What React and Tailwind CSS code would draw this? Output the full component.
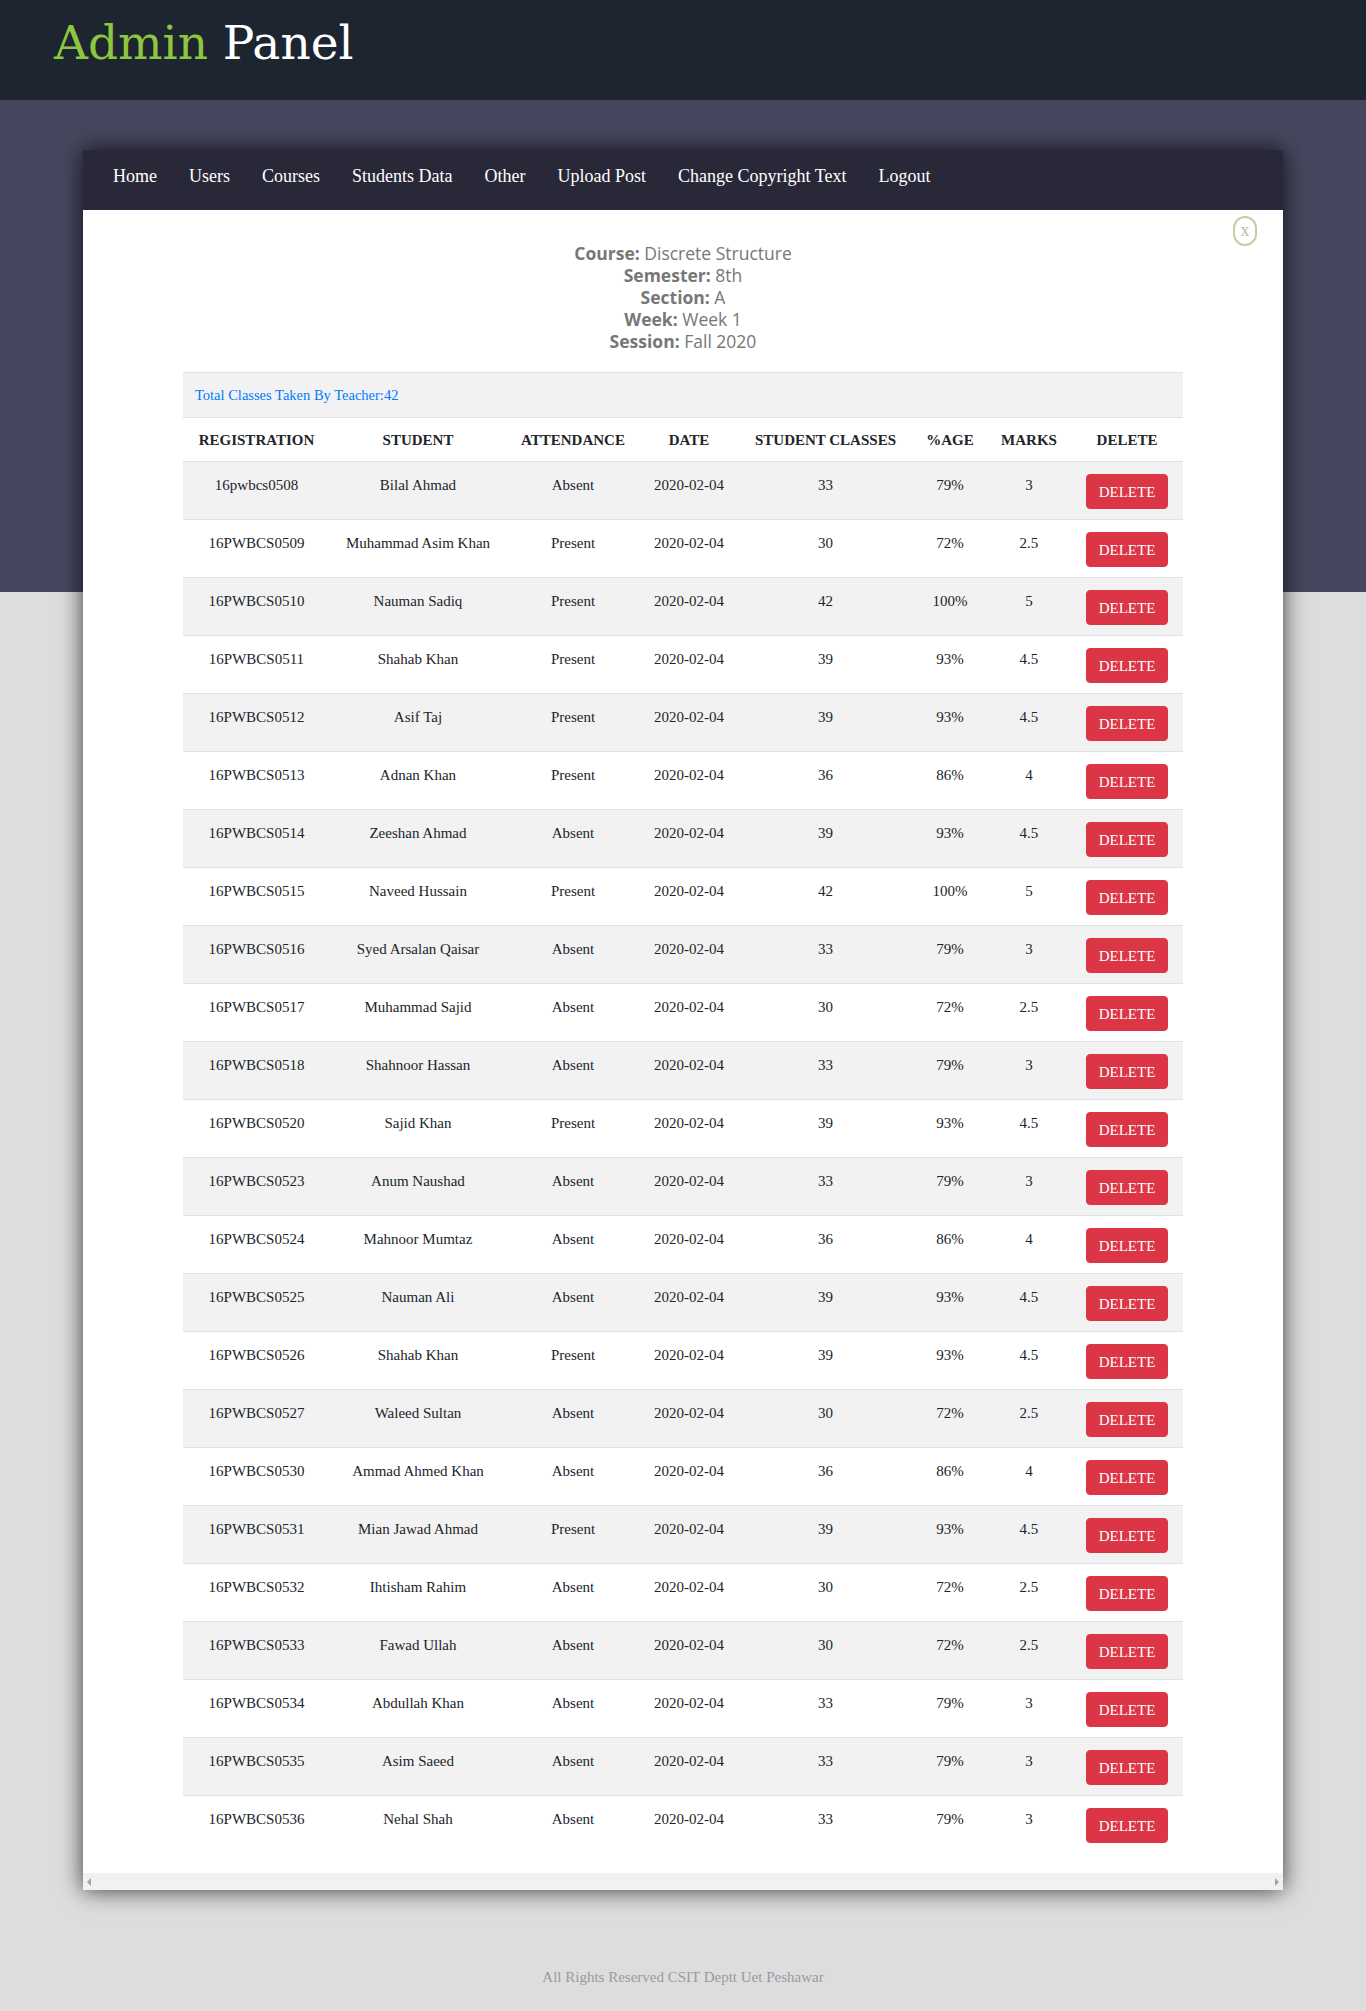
import React from "react";

const rows = [
  ["16pwbcs0508", "Bilal Ahmad", "Absent", "33", "79%", "3"],
  ["16PWBCS0509", "Muhammad Asim Khan", "Present", "30", "72%", "2.5"],
  ["16PWBCS0510", "Nauman Sadiq", "Present", "42", "100%", "5"],
  ["16PWBCS0511", "Shahab Khan", "Present", "39", "93%", "4.5"],
  ["16PWBCS0512", "Asif Taj", "Present", "39", "93%", "4.5"],
  ["16PWBCS0513", "Adnan Khan", "Present", "36", "86%", "4"],
  ["16PWBCS0514", "Zeeshan Ahmad", "Absent", "39", "93%", "4.5"],
  ["16PWBCS0515", "Naveed Hussain", "Present", "42", "100%", "5"],
  ["16PWBCS0516", "Syed Arsalan Qaisar", "Absent", "33", "79%", "3"],
  ["16PWBCS0517", "Muhammad Sajid", "Absent", "30", "72%", "2.5"],
  ["16PWBCS0518", "Shahnoor Hassan", "Absent", "33", "79%", "3"],
  ["16PWBCS0520", "Sajid Khan", "Present", "39", "93%", "4.5"],
  ["16PWBCS0523", "Anum Naushad", "Absent", "33", "79%", "3"],
  ["16PWBCS0524", "Mahnoor Mumtaz", "Absent", "36", "86%", "4"],
  ["16PWBCS0525", "Nauman Ali", "Absent", "39", "93%", "4.5"],
  ["16PWBCS0526", "Shahab Khan", "Present", "39", "93%", "4.5"],
  ["16PWBCS0527", "Waleed Sultan", "Absent", "30", "72%", "2.5"],
  ["16PWBCS0530", "Ammad Ahmed Khan", "Absent", "36", "86%", "4"],
  ["16PWBCS0531", "Mian Jawad Ahmad", "Present", "39", "93%", "4.5"],
  ["16PWBCS0532", "Ihtisham Rahim", "Absent", "30", "72%", "2.5"],
  ["16PWBCS0533", "Fawad Ullah", "Absent", "30", "72%", "2.5"],
  ["16PWBCS0534", "Abdullah Khan", "Absent", "33", "79%", "3"],
  ["16PWBCS0535", "Asim Saeed", "Absent", "33", "79%", "3"],
  ["16PWBCS0536", "Nehal Shah", "Absent", "33", "79%", "3"],
];

const navItems = ["Home", "Users", "Courses", "Students Data", "Other", "Upload Post", "Change Copyright Text", "Logout"];

const headers = ["REGISTRATION", "STUDENT", "ATTENDANCE", "DATE", "STUDENT CLASSES", "%AGE", "MARKS", "DELETE"];

export default function App() {
  return (
    <div className="min-h-[2011px] w-full bg-[#dddddd] font-['Liberation_Serif',serif]">
      <header className="h-[100px] bg-[#1d2530] pl-[54px] pt-[19px]">
        <h1 className="font-['DejaVu_Serif',serif] text-[47px] leading-none font-normal">
          <span className="text-[#8dc63f]">Admin</span>{" "}
          <span className="text-white">Panel</span>
        </h1>
      </header>

      <div className="bg-[linear-gradient(to_bottom,#46465e_492px,#dddddd_492px)] pt-[50px]">
        <div className="mx-auto w-[1200px] bg-white shadow-[0_0_22px_rgba(0,0,0,0.75)]">
          <nav className="flex h-[60px] items-center bg-[#292838] pb-[8px] pl-[14px]">
            {navItems.map((item) => (
              <a key={item} className="px-4 text-[18px] text-white">
                {item}
              </a>
            ))}
          </nav>

          <div className="relative">
            <div className="absolute right-[26px] top-[6px] flex h-[30px] w-6 items-center justify-center rounded-[12px] border-2 border-[#cacaa9] pb-[3px] text-[18px] leading-none text-[#bdbd9e]">
              x
            </div>

            <div className="pt-[32px] text-center font-['Open_Sans',sans-serif] text-[17.5px] leading-[22px] text-[#777777]">
              <div>
                <span className="font-bold">Course:</span> Discrete Structure
              </div>
              <div>
                <span className="font-bold">Semester:</span> 8th
              </div>
              <div>
                <span className="font-bold">Section:</span> A
              </div>
              <div>
                <span className="font-bold">Week:</span> Week 1
              </div>
              <div>
                <span className="font-bold">Session:</span> Fall 2020
              </div>
            </div>

            <div className="pb-[20px] pt-[20px]">
              <table className="mx-auto w-[1000px] table-fixed border-collapse text-[15px] text-[#212529]">
                <colgroup>
                  <col className="w-[147px]" />
                  <col className="w-[176px]" />
                  <col className="w-[134px]" />
                  <col className="w-[98px]" />
                  <col className="w-[175px]" />
                  <col className="w-[74px]" />
                  <col className="w-[84px]" />
                  <col className="w-[112px]" />
                </colgroup>
                <tbody>
                  <tr className="border-t border-[#dee2e6] bg-[#f2f2f2]">
                    <td colSpan={8} className="px-3 py-3 text-left text-[14.5px] leading-[20px] text-[#007bff]">
                      Total Classes Taken By Teacher:42
                    </td>
                  </tr>
                  <tr className="border-t border-[#dee2e6] bg-white">
                    {headers.map((h) => (
                      <th key={h} className="whitespace-nowrap px-1 pt-[13px] pb-[11px] text-center text-[15px] font-bold leading-[19px]">
                        {h}
                      </th>
                    ))}
                  </tr>
                  {rows.map((r, i) => (
                    <tr key={i} className={`border-t border-[#dee2e6] ${i % 2 === 0 ? "bg-[#f2f2f2]" : "bg-white"}`}>
                      <td className="px-1 pt-[12px] pb-[10px] text-center align-top leading-[22px]">{r[0]}</td>
                      <td className="px-1 pt-[12px] pb-[10px] text-center align-top leading-[22px]">{r[1]}</td>
                      <td className="px-1 pt-[12px] pb-[10px] text-center align-top leading-[22px]">{r[2]}</td>
                      <td className="px-1 pt-[12px] pb-[10px] text-center align-top leading-[22px]">2020-02-04</td>
                      <td className="px-1 pt-[12px] pb-[10px] text-center align-top leading-[22px]">{r[3]}</td>
                      <td className="px-1 pt-[12px] pb-[10px] text-center align-top leading-[22px]">{r[4]}</td>
                      <td className="px-1 pt-[12px] pb-[10px] text-center align-top leading-[22px]">{r[5]}</td>
                      <td className="px-1 pt-[12px] pb-[10px] text-center align-top">
                        <button className="h-[35px] rounded-[4px] border border-[#dc3545] bg-[#dc3545] px-3 text-[15px] leading-[22px] text-white">
                          DELETE
                        </button>
                      </td>
                    </tr>
                  ))}
                </tbody>
              </table>
            </div>

            <div className="flex h-[17px] items-center justify-between bg-[#f1f1f1] px-[4px]">
              <span className="h-0 w-0 border-y-[4px] border-r-[4px] border-y-transparent border-r-[#a3a3a3]" />
              <span className="h-0 w-0 border-y-[4px] border-l-[4px] border-y-transparent border-l-[#a3a3a3]" />
            </div>
          </div>
        </div>

        <footer className="mt-[76px] pb-[22px] text-center text-[15px] leading-[22px] text-[#9a9aa2]">
          All Rights Reserved CSIT Deptt Uet Peshawar
        </footer>
      </div>
    </div>
  );
}
